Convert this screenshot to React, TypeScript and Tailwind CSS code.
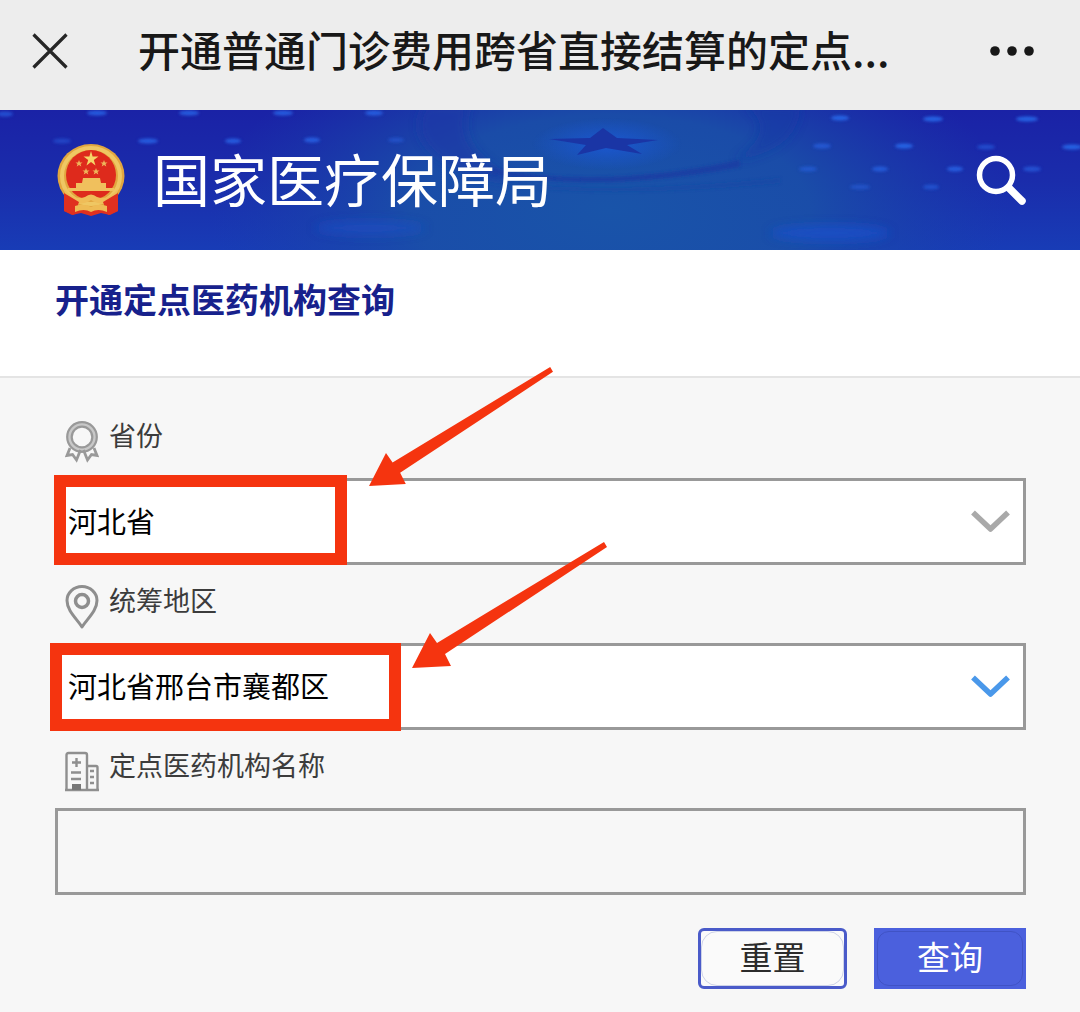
import { useState, type ReactNode } from 'react';

const GLINTS: [number, number, number, number][] = [
  [5, 4, 8, 0.7], [97, 3, 10, 0.9], [189, 3, 10, 0.9], [283, 3, 10, 0.9], [374, 3, 9, 0.9], [62, 31, 9, 0.5],
  [148, 31, 10, 0.9], [233, 31, 8, 0.9], [312, 30, 8, 0.9], [396, 30, 8, 0.5],
  [840, 8, 9, 1], [933, 9, 10, 1], [1027, 9, 11, 1], [822, 36, 9, 0.7], [904, 36, 9, 1],
  [986, 37, 9, 0.6], [1072, 37, 10, 1], [808, 59, 9, 0.6], [880, 59, 8, 0.8], [955, 59, 8, 0.9],
  [1032, 59, 9, 0.7], [860, 77, 10, 0.5], [931, 77, 8, 0.6],
];

function BannerArt() {
  return (
    <svg className="absolute inset-0 h-full w-full" viewBox="0 0 1080 140" preserveAspectRatio="none" aria-hidden="true">
      <defs>
        <linearGradient id="base" x1="0" y1="0" x2="0" y2="1">
          <stop offset="0" stopColor="#1a22a6" />
          <stop offset="0.5" stopColor="#1a2cab" />
          <stop offset="1" stopColor="#183cb6" />
        </linearGradient>
        <radialGradient id="glow" cx="0.5" cy="0.5" r="0.5">
          <stop offset="0" stopColor="#1954a9" />
          <stop offset="0.5" stopColor="#1a50a8" stopOpacity="0.9" />
          <stop offset="1" stopColor="#1a3fab" stopOpacity="0" />
        </radialGradient>
        <radialGradient id="halo" cx="0.5" cy="0.5" r="0.5">
          <stop offset="0" stopColor="#1b57d0" />
          <stop offset="1" stopColor="#1b57d0" stopOpacity="0" />
        </radialGradient>
        <filter id="soft" x="-20%" y="-100%" width="140%" height="300%">
          <feGaussianBlur stdDeviation="1.5" />
        </filter>
        <filter id="haze" x="-20%" y="-100%" width="140%" height="300%">
          <feGaussianBlur stdDeviation="5" />
        </filter>
      </defs>
      <rect width="1080" height="140" fill="url(#base)" />
      <ellipse cx="610" cy="100" rx="400" ry="190" fill="url(#glow)" />
      <g filter="url(#haze)">
        <path d="M425 -5Q405 30 450 55Q480 70 520 72Q450 40 470 -5Z" fill="#1a35a6" opacity="0.6" />
        <path d="M745 -5Q780 20 735 50Q800 40 800 -5Z" fill="#1a35a6" opacity="0.5" />
        <ellipse cx="830" cy="123" rx="60" ry="8" fill="#1b50c8" opacity="0.8" />
        <ellipse cx="370" cy="118" rx="55" ry="7" fill="#1b4fc5" opacity="0.6" />
      </g>
      <ellipse cx="607" cy="34" rx="75" ry="26" fill="url(#halo)" />
      <g filter="url(#soft)">
        <path d="M490 58Q600 80 740 50L740 57Q600 84 490 63Z" fill="#173ca3" opacity="0.8" />
        <path d="M540 76Q640 82 780 68L780 73Q640 86 540 79Z" fill="#1947a5" opacity="0.5" />
        {GLINTS.map(([x, y, r, o]) => (
          <ellipse key={`${x}-${y}`} cx={x} cy={y} rx={r} ry="2.400" fill="#2763e4" opacity={o} />
        ))}
      </g>
      <path d="M603 18L617 28L658 30L627 35L642 44L606 38L577 45L586 35L549 29L590 28Z" fill="#1a35a5" />
    </svg>
  );
}

function Emblem() {
  return (
    <svg className="h-[76px] w-[68px] shrink-0" viewBox="0 0 68 76" role="img" aria-label="国徽">
      <path d="M8 48H60L58 62L61 69L53 73L44 71L34 74L24 71L15 73L7 69L10 62Z" fill="#e0301f" />
      <ellipse cx="34" cy="34" rx="33.500" ry="32" fill="#e2a63f" />
      <ellipse cx="34" cy="34" rx="29" ry="28" fill="none" stroke="#efc763" strokeWidth="4" />
      <circle cx="34" cy="33" r="25" fill="#de2a1c" />
      <path d="M34 9L35.600 14.600L41.500 14.600L36.800 18L38.500 23.500L34 20L29.500 23.500L31.200 18L26.500 14.600L32.400 14.600Z" fill="#f6d568" />
      <g fill="#eeb55a">
        <path id="smallStar" d="M22 18l1 2.500h2.500l-2 1.500l.8 2.500l-2.300-1.500l-2.300 1.500l.8-2.500l-2-1.500h2.500z" />
        <use href="#smallStar" x="25" />
        <use href="#smallStar" x="7" y="8" />
        <use href="#smallStar" x="17" y="8" />
      </g>
      <path d="M26 36H43L44 41H49V46H57V49H11V46H19V41H25Z" fill="#f0c05d" />
      <path d="M7 47Q17 59 28 55Q34 50 40 55Q51 59 61 47L57 59Q45 65 34 58Q23 65 11 59Z" fill="#efbd58" />
      <path d="M7 51L22 60L17 73L7 69Z M61 51L46 60L51 73L61 69Z" fill="#e0301f" />
      <path d="M18 64Q27 61 34 65Q41 61 50 64V70Q41 66 34 70Q27 66 18 70Z" fill="#eebb55" />
    </svg>
  );
}

function RosetteIcon() {
  return (
    <svg className="h-[44px] w-[34px] shrink-0" viewBox="0 0 34 44" fill="none" stroke="#999" strokeWidth="2.200" aria-hidden="true">
      <circle cx="17" cy="17" r="12.500" stroke="#c8c8c8" strokeWidth="4" />
      <circle cx="17" cy="17" r="14.800" />
      <circle cx="17" cy="17" r="10.300" />
      <path d="M5 28L2 35.500L7.500 34.500L11.500 40L15.500 30 M29 28L32 35.500L26.500 34.500L22.500 40L18.500 30" strokeWidth="2.800" />
    </svg>
  );
}

function PinIcon() {
  return (
    <svg className="h-[44px] w-[34px] shrink-0" viewBox="0 0 34 44" fill="none" stroke="#8e8e8e" strokeWidth="3" aria-hidden="true">
      <path d="M17 42C12 34 2 26 2 15.500A15 14 0 0 1 32 15.500C32 26 22 34 17 42Z" strokeLinejoin="round" />
      <circle cx="17" cy="16" r="6.500" strokeWidth="3.500" />
    </svg>
  );
}

function BuildingIcon() {
  return (
    <svg className="h-[44px] w-[34px] shrink-0" viewBox="0 0 34 44" fill="none" stroke="#8f8f8f" strokeWidth="2.400" aria-hidden="true">
      <path d="M1.500 40V5Q1.500 3 3.500 3H20Q22 3 22 5V40" />
      <path d="M22 16H31Q32.500 16 32.500 17.500V40" />
      <path d="M0 40H34" />
      <path d="M11.500 8V17M7 12.500H16M6 22.500H16M6 29H16M25 21H29M25 27H29M25 33H29" />
      <path d="M7 34H16V40H7Z" fill="#777" stroke="none" />
    </svg>
  );
}

function FieldLabel({ htmlFor, icon, children }: { htmlFor: string; icon: ReactNode; children: ReactNode }) {
  return (
    <label htmlFor={htmlFor} className="flex items-start gap-2.5 px-2.5 pt-5 pb-3.5 text-[27px] leading-[30px] text-[#3c3c3c]">
      {icon}
      <span>{children}</span>
    </label>
  );
}

function SelectBox({ id, options, tone, children }: { id: string; options: string[]; tone: string; children: ReactNode }) {
  const [value, setValue] = useState(options[0]);
  return (
    <div className="relative">
      <select
        id={id}
        value={value}
        onChange={(e) => setValue(e.target.value)}
        className="block h-[87px] w-full appearance-none border-3 border-[#999] bg-white pr-16 pb-0.5 pl-2.5 text-[29px] text-black outline-none"
      >
        {options.map((o) => (
          <option key={o}>{o}</option>
        ))}
      </select>
      <svg className={`pointer-events-none absolute top-8 right-4 h-6 w-10 ${tone}`} viewBox="0 0 40 24" fill="none" stroke="currentColor" strokeWidth="5.500" aria-hidden="true">
        <path d="M3 2.500L20.500 19L38 2.500" strokeLinejoin="round" />
      </svg>
      {children}
    </div>
  );
}

function Arrow({ className }: { className: string }) {
  return (
    <svg className={`pointer-events-none absolute z-10 ${className}`} viewBox="0 0 195 126" preserveAspectRatio="none" fill="#f5340f" aria-hidden="true">
      <path d="M0 126L18 91L25 101L192 0L195 5L33 112L39 124Z" />
    </svg>
  );
}

export default function App() {
  return (
    <div className="min-h-screen bg-[#f7f7f7] font-['Noto_Sans_CJK_SC',sans-serif]">
      <header className="flex h-[110px] items-center bg-[#ededed] px-8 pb-2 text-[#181818]">
        <button type="button" aria-label="关闭" className="shrink-0">
          <svg className="h-9 w-9" viewBox="0 0 36 36" stroke="#262626" strokeWidth="3.200" aria-hidden="true">
            <path d="M1.500 1.500L34.500 34.500M34.500 1.500L1.500 34.500" />
          </svg>
        </button>
        <h1 className="ml-[70px] flex-1 truncate pb-1 text-[42px] leading-[60px] font-medium">开通普通门诊费用跨省直接结算的定点...</h1>
        <button type="button" aria-label="更多" className="mr-3 shrink-0">
          <svg className="h-3 w-12" viewBox="0 0 48 12" fill="#181818" aria-hidden="true">
            <circle cx="7" cy="6" r="4.800" />
            <circle cx="24" cy="6" r="4.800" />
            <circle cx="41" cy="6" r="4.800" />
          </svg>
        </button>
      </header>

      <div className="relative h-[140px] overflow-hidden bg-[#1a2cab]">
        <BannerArt />
        <div className="relative flex h-full items-center pr-[52px] pl-[57px]">
          <Emblem />
          <p className="ml-7 flex-1 pb-1.5 text-[57px] leading-[80px] text-white">国家医疗保障局</p>
          <button type="button" aria-label="搜索">
            <svg className="h-[52px] w-[52px]" viewBox="0 0 52 52" fill="none" stroke="white" aria-hidden="true">
              <circle cx="20" cy="21" r="16.500" strokeWidth="5.500" />
              <path d="M33 34L46 47" strokeWidth="7.500" strokeLinecap="round" />
            </svg>
          </button>
        </div>
      </div>

      <section className="border-b-2 border-[#e4e4e4] bg-white px-[55px] pt-[25px] pb-[53px]">
        <h2 className="text-[34px] leading-[48px] font-bold text-[#17218c]">开通定点医药机构查询</h2>
      </section>

      <form className="pt-[22px] pr-[54px] pb-6 pl-[55px]" onSubmit={(e) => e.preventDefault()}>
        <FieldLabel htmlFor="province" icon={<RosetteIcon />}>省份</FieldLabel>
        <SelectBox id="province" options={['河北省']} tone="text-[#a9a9a9]">
          <div className="pointer-events-none absolute -top-[3px] -left-px h-[90px] w-[293px] border-12 border-[#f5340f]" />
          <Arrow className="-top-[111px] left-[314px] h-[119px] w-[184px]" />
        </SelectBox>

        <FieldLabel htmlFor="region" icon={<PinIcon />}>统筹地区</FieldLabel>
        <SelectBox id="region" options={['河北省邢台市襄都区']} tone="text-[#4a98ea]">
          <div className="pointer-events-none absolute top-0 -left-[5px] h-[88px] w-[351px] border-12 border-[#f5340f]" />
          <Arrow className="-top-[101px] left-[357px] h-[126px] w-[195px]" />
        </SelectBox>

        <FieldLabel htmlFor="institution" icon={<BuildingIcon />}>定点医药机构名称</FieldLabel>
        <input id="institution" type="text" className="block h-[87px] w-full border-3 border-[#999] bg-transparent px-2.5 text-[29px] outline-none" />

        <div className="mt-[33px] flex justify-end gap-[27px] text-[33px] leading-[48px]">
          <button type="reset" className="h-[61px] w-[149px] rounded-md border-3 border-[#4a5bc9] bg-[#fafafa] text-[#2b2b2b]">
            <span className="flex h-full items-center justify-center rounded-2xl border border-[#cdd2e8] pb-1.5">重置</span>
          </button>
          <button type="submit" className="h-[61px] w-[152px] bg-[#4b60dd] p-[3px] text-white">
            <span className="flex h-full items-center justify-center rounded-xl border border-[#4053c5] pb-1.5">查询</span>
          </button>
        </div>
      </form>
    </div>
  );
}
